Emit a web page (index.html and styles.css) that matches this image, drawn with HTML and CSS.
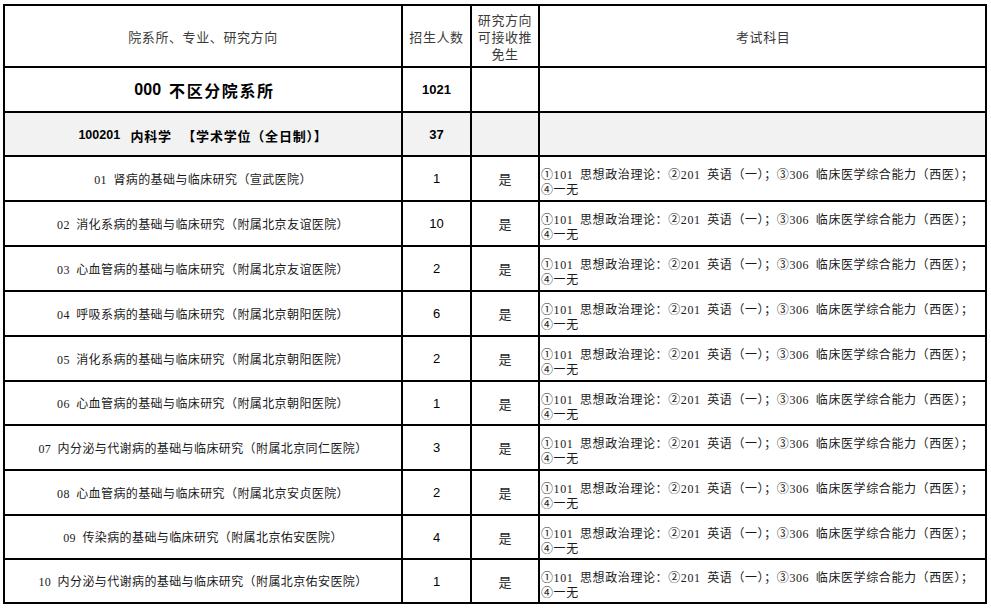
FILE: index.html
```html
<!DOCTYPE html>
<html lang="zh-CN">
<head>
<meta charset="utf-8">
<title>招生目录</title>
<link rel="stylesheet" href="styles.css">
</head>
<body>
<div class="sheet">
  <div class="row head">
    <div class="cell c1">院系所、专业、研究方向</div>
    <div class="cell c2">招生人数</div>
    <div class="cell c3">研究方向<br>可接收推<br>免生</div>
    <div class="cell c4 hc">考试科目</div>
  </div>
  <div class="row r45">
    <div class="cell c1 dept"><span class="num">000</span> <span class="wide">不区分院系所</span></div>
    <div class="cell c2 total">1021</div>
    <div class="cell c3"></div>
    <div class="cell c4"></div>
  </div>
  <div class="row r44 grey">
    <div class="cell c1 major"><span class="num">100201</span> 内科学 【学术学位（全日制）】</div>
    <div class="cell c2 total">37</div>
    <div class="cell c3"></div>
    <div class="cell c4"></div>
  </div>

  <div class="row r45">
    <div class="cell c1 dir">01 肾病的基础与临床研究（宣武医院）</div>
    <div class="cell c2 cnt">1</div>
    <div class="cell c3 yes">是</div>
    <div class="cell c4 exam">①101 思想政治理论：②201 英语（一）；③306 临床医学综合能力（西医）；<br>④一无</div>
  </div>
  <div class="row r45">
    <div class="cell c1 dir">02 消化系病的基础与临床研究（附属北京友谊医院）</div>
    <div class="cell c2 cnt">10</div>
    <div class="cell c3 yes">是</div>
    <div class="cell c4 exam">①101 思想政治理论：②201 英语（一）；③306 临床医学综合能力（西医）；<br>④一无</div>
  </div>
  <div class="row r45">
    <div class="cell c1 dir">03 心血管病的基础与临床研究（附属北京友谊医院）</div>
    <div class="cell c2 cnt">2</div>
    <div class="cell c3 yes">是</div>
    <div class="cell c4 exam">①101 思想政治理论：②201 英语（一）；③306 临床医学综合能力（西医）；<br>④一无</div>
  </div>
  <div class="row r45">
    <div class="cell c1 dir">04 呼吸系病的基础与临床研究（附属北京朝阳医院）</div>
    <div class="cell c2 cnt">6</div>
    <div class="cell c3 yes">是</div>
    <div class="cell c4 exam">①101 思想政治理论：②201 英语（一）；③306 临床医学综合能力（西医）；<br>④一无</div>
  </div>
  <div class="row r45">
    <div class="cell c1 dir">05 消化系病的基础与临床研究（附属北京朝阳医院）</div>
    <div class="cell c2 cnt">2</div>
    <div class="cell c3 yes">是</div>
    <div class="cell c4 exam">①101 思想政治理论：②201 英语（一）；③306 临床医学综合能力（西医）；<br>④一无</div>
  </div>
  <div class="row r44">
    <div class="cell c1 dir">06 心血管病的基础与临床研究（附属北京朝阳医院）</div>
    <div class="cell c2 cnt">1</div>
    <div class="cell c3 yes">是</div>
    <div class="cell c4 exam">①101 思想政治理论：②201 英语（一）；③306 临床医学综合能力（西医）；<br>④一无</div>
  </div>
  <div class="row r45">
    <div class="cell c1 dir">07 内分泌与代谢病的基础与临床研究（附属北京同仁医院）</div>
    <div class="cell c2 cnt">3</div>
    <div class="cell c3 yes">是</div>
    <div class="cell c4 exam">①101 思想政治理论：②201 英语（一）；③306 临床医学综合能力（西医）；<br>④一无</div>
  </div>
  <div class="row r45">
    <div class="cell c1 dir">08 心血管病的基础与临床研究（附属北京安贞医院）</div>
    <div class="cell c2 cnt">2</div>
    <div class="cell c3 yes">是</div>
    <div class="cell c4 exam">①101 思想政治理论：②201 英语（一）；③306 临床医学综合能力（西医）；<br>④一无</div>
  </div>
  <div class="row r44">
    <div class="cell c1 dir">09 传染病的基础与临床研究（附属北京佑安医院）</div>
    <div class="cell c2 cnt">4</div>
    <div class="cell c3 yes">是</div>
    <div class="cell c4 exam">①101 思想政治理论：②201 英语（一）；③306 临床医学综合能力（西医）；<br>④一无</div>
  </div>
  <div class="row r44">
    <div class="cell c1 dir">10 内分泌与代谢病的基础与临床研究（附属北京佑安医院）</div>
    <div class="cell c2 cnt">1</div>
    <div class="cell c3 yes">是</div>
    <div class="cell c4 exam">①101 思想政治理论：②201 英语（一）；③306 临床医学综合能力（西医）；<br>④一无</div>
  </div>
</div>
</body>
</html>
```
FILE: styles.css
```css
html, body {
  margin: 0;
  padding: 0;
  background: #ffffff;
}
body {
  padding: 4px 0 0 3px;
  font-family: "Liberation Serif", "Noto Sans CJK SC", serif;
  color: #111;
}
.sheet {
  width: 982px;
  border-left: 2px solid #000;
  border-top: 2px solid #000;
}
.row {
  display: grid;
  grid-template-columns: 398px 69px 68px 447px;
}
.head { height: 62px; }
.r45 { height: 45px; }
.r44 { height: 44px; }
.grey { background: #f2f2f2; }
.cell {
  box-sizing: border-box;
  border-right: 2px solid #000;
  border-bottom: 2px solid #000;
  display: flex;
  align-items: center;
  justify-content: center;
  text-align: center;
  overflow: hidden;
}
.head .cell {
  font-family: "Noto Sans CJK SC", sans-serif;
  font-size: 13px;
  letter-spacing: 0.6px;
  color: #3a3a3a;
  line-height: 17px;
}
.head .c4 {
  justify-content: flex-start;
  padding-left: 196px;
}
.dept {
  font-family: "Liberation Sans", "Noto Sans CJK SC", sans-serif;
  font-size: 16px;
  font-weight: bold;
  color: #000;
  padding-left: 3px;
}
.dept .wide { letter-spacing: 1.6px; margin-left: 8px; }
.major {
  font-family: "Liberation Sans", "Noto Sans CJK SC", sans-serif;
  font-size: 13px;
  font-weight: bold;
  letter-spacing: 0.8px;
  word-spacing: 6px;
  color: #000;
  white-space: pre;
  padding-top: 2px;
}
.major .num { font-size: 12.5px; letter-spacing: 0; }
.total {
  font-family: "Liberation Sans", sans-serif;
  font-size: 13px;
  font-weight: bold;
  color: #000;
}
.dir {
  font-size: 12px;
  letter-spacing: 0.4px;
  word-spacing: 3px;
  white-space: pre;
  color: #1a1a1a;
}
.cnt {
  font-family: "Liberation Sans", sans-serif;
  font-size: 13px;
  color: #000;
}
.yes {
  font-family: "Noto Sans CJK SC", sans-serif;
  font-size: 13px;
  color: #222;
}
.exam {
  display: block;
  text-align: left;
  font-size: 12px;
  line-height: 15px;
  letter-spacing: 0.6px;
  word-spacing: 3px;
  padding: 11px 0 0 1px;
  white-space: nowrap;
  color: #1a1a1a;
}
```
